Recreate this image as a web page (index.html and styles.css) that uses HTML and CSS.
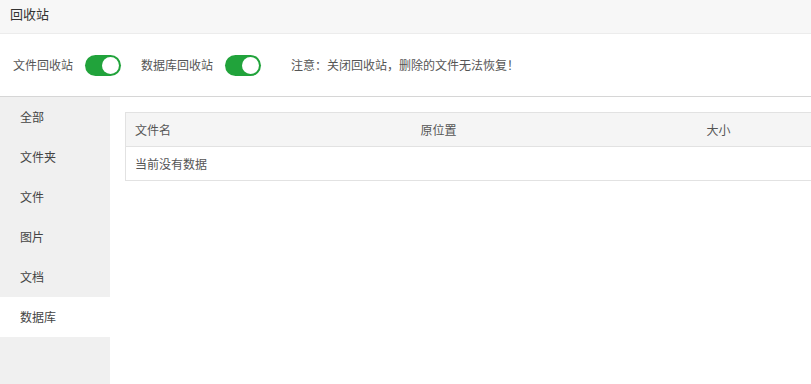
FILE: index.html
```html
<!DOCTYPE html>
<html lang="zh-CN">

<head>
  <meta charset="UTF-8">
  <meta name="viewport" content="width=device-width, initial-scale=1.0">
  <title>回收站</title>
  <link rel="stylesheet" href="styles.css">
</head>

<body>

  <div class="page-header">回收站</div>

  <div class="toolbar">
    <span class="label">文件回收站</span>
    <span class="switch on"><span class="knob"></span></span>
    <span class="label label-db">数据库回收站</span>
    <span class="switch on"><span class="knob"></span></span>
    <span class="notice">注意<span class="punct">：</span>关闭回收站<span class="punct">，</span>删除的文件无法恢复<span class="punct">！</span></span>
  </div>

  <div class="main">
    <ul class="side-menu">
      <li>全部</li>
      <li>文件夹</li>
      <li>文件</li>
      <li>图片</li>
      <li>文档</li>
      <li class="active">数据库</li>
    </ul>

    <div class="content">
      <table class="list">
        <thead>
          <tr>
            <th class="col-name">文件名</th>
            <th class="col-path">原位置</th>
            <th>大小</th>
          </tr>
        </thead>
        <tbody>
          <tr>
            <td colspan="3">当前没有数据</td>
          </tr>
        </tbody>
      </table>
    </div>
  </div>

</body>

</html>
```

FILE: styles.css
```css
* {
  box-sizing: border-box;
}

body {
  margin: 0;
  font-family: "Open Sans", "Noto Sans CJK SC", sans-serif;
  font-size: 12px;
  color: #555;
  height: 384px;
  display: flex;
  flex-direction: column;
  overflow: hidden;
}

.page-header {
  height: 34px;
  line-height: 28px;
  padding-left: 10px;
  font-size: 13px;
  color: #333;
  background-color: #f7f7f7;
  border-bottom: 1px solid #ececec;
}

.toolbar {
  height: 63px;
  display: flex;
  align-items: center;
  padding-left: 13px;
  border-bottom: 1px solid #d6d6d6;
}

.label-db {
  margin-left: 20px;
}

.switch {
  position: relative;
  width: 36px;
  height: 21px;
  border-radius: 11px;
  margin-left: 12px;
  background-color: #ddd;
}

.switch.on {
  background-color: #21a33b;
}

.switch .knob {
  position: absolute;
  top: 2px;
  left: 2px;
  width: 17px;
  height: 17px;
  border-radius: 50%;
  background-color: #fff;
}

.switch.on .knob {
  left: 17px;
}

.notice {
  margin-left: 30px;
}

.punct {
  font-family: "Noto Sans CJK TC", sans-serif;
}

.main {
  flex: 1;
  display: flex;
}

.side-menu {
  width: 110px;
  margin: 0;
  padding: 0;
  list-style: none;
  background-color: #f0f0f0;
}

.side-menu li {
  height: 40px;
  line-height: 42px;
  padding-left: 20px;
  color: #444;
}

.side-menu li.active {
  background-color: #fff;
}

.content {
  flex: 1;
  padding: 15px 0 0 15px;
}

.list {
  width: 100%;
  border-collapse: collapse;
  border: 1px solid #e2e2e2;
  border-right: none;
}

.list th,
.list td {
  height: 34px;
  padding: 0 0 0 9px;
  text-align: left;
  font-weight: normal;
}

.list th {
  background-color: #f5f5f5;
  border-bottom: 1px solid #e2e2e2;
}

.col-name {
  width: 286px;
}

.col-path {
  width: 286px;
}
```
